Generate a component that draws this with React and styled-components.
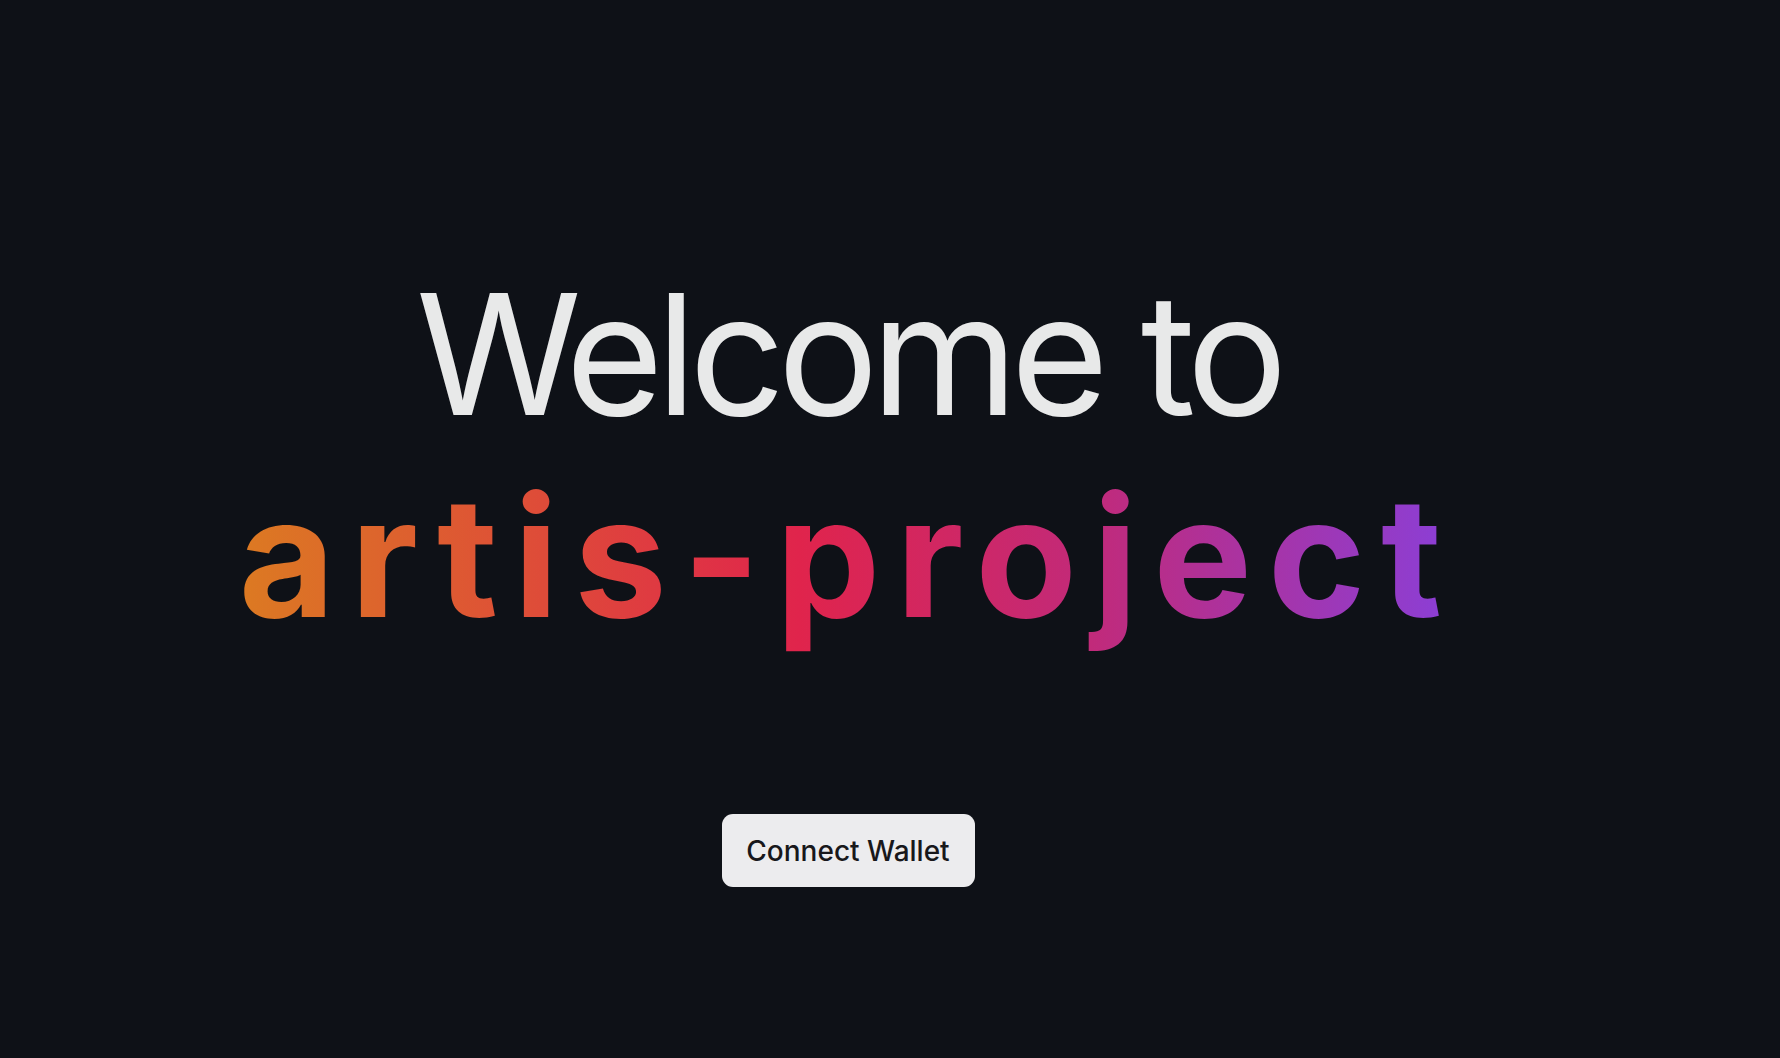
import React from "react";
import styled, { createGlobalStyle } from "styled-components";

const Global = createGlobalStyle`
  html, body { margin: 0; padding: 0; background: #0e1117; }
  body { font-family: Inter, "Noto Sans", sans-serif; }
  * { box-sizing: border-box; }
`;

const Page = styled.main`
  min-height: 1058px;
  display: flex;
  flex-direction: column;
  align-items: center;
  background: #0e1117;
  padding: 270px 84px 0 0;
`;

const Welcome = styled.h1`
  margin: 0;
  font-family: Inter, sans-serif;
  font-weight: 400;
  font-size: 168px;
  line-height: 1;
  letter-spacing: -7.5px;
  color: #e8e9e9;
`;

const Brand = styled.h2`
  margin: 36px 0 0;
  padding: 0 0 24px 0;
  font-family: Inter, sans-serif;
  font-weight: 700;
  font-size: 166px;
  line-height: 1;
  letter-spacing: 15.6px;
  background: linear-gradient(90deg, #dc7a22 0%, #e0244c 46%, #c12a7a 70%, #8a3fd8 100%);
  -webkit-background-clip: text;
  background-clip: text;
  color: transparent;
`;

const ConnectButton = styled.button`
  margin-top: 150px;
  width: 253px;
  height: 73px;
  border: none;
  border-radius: 11px;
  background: #ececee;
  color: #18181b;
  font-family: Inter, sans-serif;
  font-weight: 500;
  font-size: 28px;
  cursor: pointer;
`;

export default function App() {
  return (
    <>
      <Global />
      <Page>
        <Welcome>Welcome to</Welcome>
        <Brand>artis-project</Brand>
        <ConnectButton>Connect Wallet</ConnectButton>
      </Page>
    </>
  );
}
